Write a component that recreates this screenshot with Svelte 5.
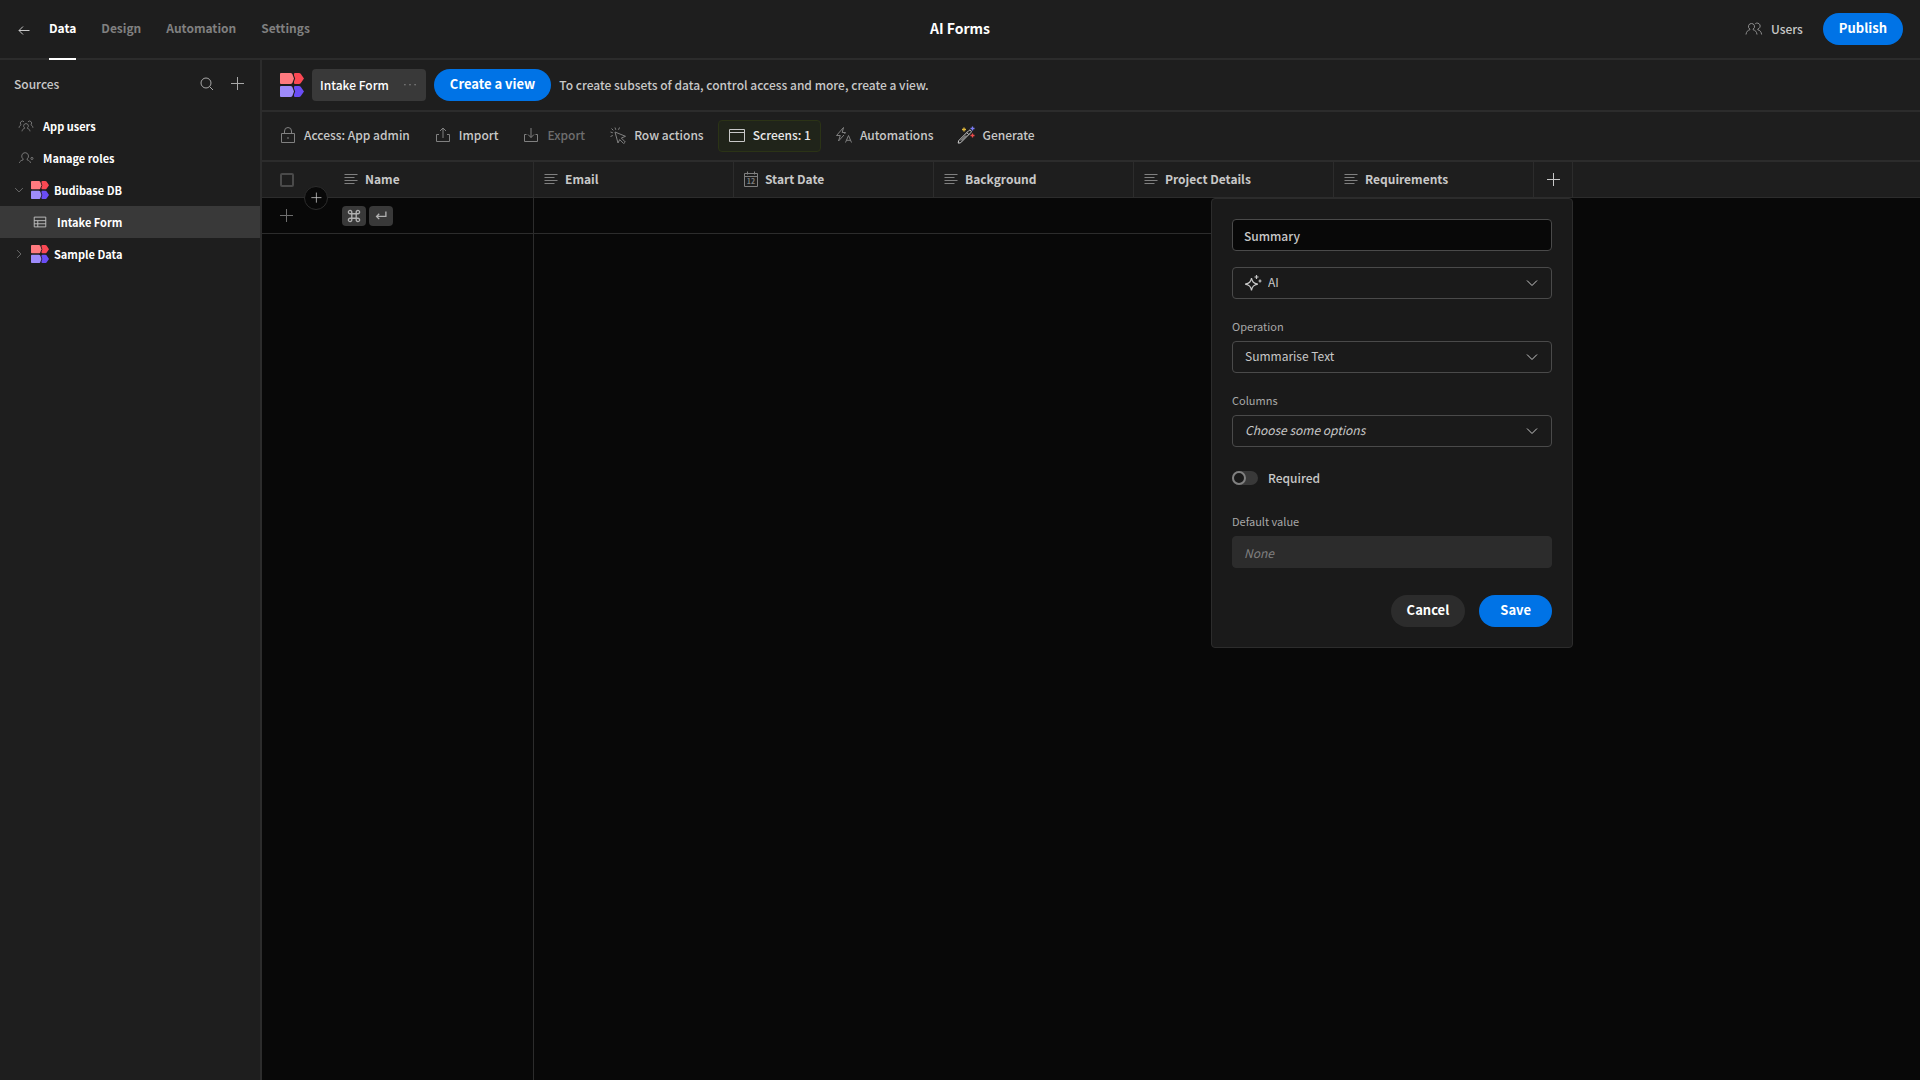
<script lang="ts">
  type Source = {
    name: string;
    icon: string;
    kind: "root" | "db" | "table";
    open?: boolean;
    selected?: boolean;
  };

  const tabs = ["Data", "Design", "Automation", "Settings"];
  let activeTab = $state("Data");

  const sources: Source[] = [
    { name: "App users", icon: "userGroup", kind: "root" },
    { name: "Manage roles", icon: "userAdmin", kind: "root" },
    { name: "Budibase DB", icon: "logo", kind: "db", open: true },
    { name: "Intake Form", icon: "table", kind: "table", selected: true },
    { name: "Sample Data", icon: "logo", kind: "db" },
  ];

  const actions = [
    { label: "Access: App admin", icon: "lock" },
    { label: "Import", icon: "import" },
    { label: "Export", icon: "export", disabled: true },
    { label: "Row actions", icon: "cursor" },
    { label: "Screens: 1", icon: "screen", accent: true },
    { label: "Automations", icon: "automation" },
    { label: "Generate", icon: "wand" },
  ];

  const columns = [
    { label: "Email", icon: "text" },
    { label: "Start Date", icon: "calendar" },
    { label: "Background", icon: "text" },
    { label: "Project Details", icon: "text" },
    { label: "Requirements", icon: "text" },
  ];

  // 18x18 outlines
  const icons: Record<string, string> = {
    back: "M14.5 9.5H4M8 5.5l-4 4 4 4",
    search: "M8 3a5 5 0 1 1 0 10A5 5 0 0 1 8 3ZM11.6 11.6 15 15",
    plus: "M9.5 2v13M3 8.5h13",
    chevronDown: "M4 6.5 9 11.5 14 6.5",
    chevronRight: "M6.5 4 11.5 9 6.5 14",
    dots: "M3 8.5h.6v.6H3ZM8.7 8.5h.6v.6h-.6ZM14.4 8.5h.6v.6h-.6Z",
    lock: "M2.5 7.5h13v9h-13ZM5.5 7.5V5a3.5 3.5 0 0 1 7 0v2.5M9 11v2",
    import: "M9 12V2M6 5l3-3 3 3M5 8.5H2.5v7h13v-7H13",
    export: "M9 2v9.5M6 8.5l3 3 3-3M4.5 8.5h-2v7h13v-7h-2",
    cursor:
      "M6 6l10.5 4.3-4.2 1.7 4 4-1.6 1.6-4-4-1.7 3.4ZM6.8 3.8 6 1.5M3.8 6.8 1.5 6M4.3 4.3 2.5 2.5M9.5 3.8l1-2.3M3.8 9.5l-2.3 1",
    screen: "M1.5 3.5h15v12h-15ZM1.5 6.5h15",
    automation: "M8.5 1.5l-7 8h3.8L3.5 15 9 9M8.5 1.5l-1.3 5h3.3L9.5 8M10.5 16.5l3-7 3 7M11.5 14.3h4",
    text: "M2.5 4.5h13M2.5 7.5h10M2.5 10.5h13M2.5 13.5h10",
    calendar: "M2.5 3.5h13v13h-13ZM2.5 6.5h13M5.5 1.5v3M12.5 1.5v3",
    table: "M2.5 3.5h13v11h-13ZM2.5 7.5h13M2.5 11h13M6.5 7.5v7",
    users:
      "M6.5 3.5A3 3 0 0 1 8.2 9v.8c2 .5 3.500 1.800 3.800 4.700M6.500 3.500A3 3 0 0 0 4.800 9v.8c-2 .5-3.500 1.800-3.800 4.700M10.300 3.700a3 3 0 1 1 2.500 5.300v.8c2 .5 3.500 1.800 3.800 4.700",
    userGroup:
      "M9 6.300a2.600 2.600 0 0 1 1.600 4.700v.7c1.600.4 2.600 1.400 2.900 3.300M9 6.300A2.600 2.600 0 0 0 7.400 11v.7c-1.600.4-2.600 1.400-2.900 3.300M6.800 4.300a2.300 2.300 0 1 0-3.600 3V8C2 8.500 1.400 9.300 1.200 11M11.200 4.300a2.300 2.300 0 1 1 3.600 3V8c1.200.5 1.800 1.300 2 3",
    userAdmin:
      "M8 3a3.900 3.900 0 0 1 2.300 7v1.200c1.900.4 3.300 1.400 3.900 3.300M8 3a3.900 3.900 0 0 0-2.300 7v1.200c-1.900.4-3.700 1.400-4.200 3.300M15.700 8.300a1.200 1.200 0 1 1 0 2.400 1.200 1.200 0 0 1 0-2.400",
    command:
      "M6.5 6.5h5v5h-5ZM6.5 6.5V4.700a1.900 1.900 0 1 0-1.900 1.800ZM11.5 6.5h1.900a1.900 1.900 0 1 0-1.900-1.800ZM11.5 11.5v1.800a1.900 1.900 0 1 0 1.900-1.800ZM6.5 11.5H4.600a1.900 1.900 0 1 0 1.900 1.800Z",
    enter: "M14.5 4v5.5H4M7 6.5l-3 3 3 3",
    sparkle:
      "M7.500 4c.8 4 2 5.200 6.300 6.200-4.300 1-5.500 2.200-6.300 6.300-.8-4.100-2-5.300-6.300-6.300C5.500 9.200 6.700 8 7.500 4ZM12.500 1v4M10.500 3h4M16 5.500v3M14.500 7h3",
  };

  let columnName = $state("Summary");
  let columnType = $state("AI");
  let operation = $state("Summarise Text");
  let required = $state(false);
</script>

{#snippet icon(name: string, size = 18)}
  {#if name === "logo"}
    <svg class="icon" width={size} height={size} viewBox="0 0 24 24" aria-hidden="true">
      <path fill="#ff7a7f" d="M1 0h9.500c.7 0 1.300.3 1.700.8L14 5.500l-1.800 4.700c-.4.500-1 .8-1.700.8H1a1 1 0 0 1-1-1V1a1 1 0 0 1 1-1Z" />
      <path fill="#fb4853" d="M15 0h4c.7 0 1.300.3 1.700.8L24 5.500l-3.300 4.700c-.4.500-1 .8-1.700.8h-4a1 1 0 0 1-1-1V8.500l1.200-3L14 2.500V1a1 1 0 0 1 1-1Z" />
      <path fill="#9e8bfb" d="M1 13h9.500c.7 0 1.300.3 1.700.8l1.800 4.700-1.800 4.700c-.4.500-1 .8-1.700.8H1a1 1 0 0 1-1-1v-9a1 1 0 0 1 1-1Z" />
      <path fill="#6a4df5" d="M15 13h4c.7 0 1.300.3 1.700.8l3.300 4.700-3.300 4.700c-.4.500-1 .8-1.700.8h-4a1 1 0 0 1-1-1v-1.500l1.200-3-1.200-3V14a1 1 0 0 1 1-1Z" />
    </svg>
  {:else if name === "wand"}
    <svg class="icon" width={size} height={size} viewBox="0 0 18 18" fill="none" aria-hidden="true">
      <path stroke="#d0d0d0" d="M11.800 4.600a1.400 1.400 0 0 1 2 2L3.600 16.800l-2.400.3.400-2.300ZM10 6.800l1.800 1.800M4 14.500l5-5" />
      <path stroke="#e0b63a" stroke-width="1.3" d="M7 1.5v4M5 3.5h4" />
      <path stroke="#7b7cf5" stroke-width="1.3" d="M15.5 .5v4M13.5 2.5h4" />
      <path stroke="#ee4a4a" stroke-width="1.3" d="M15.5 7.5v4M13.5 9.5h4" />
    </svg>
  {:else}
    <svg class="icon" width={size} height={size} viewBox="0 0 18 18" fill="none" stroke="currentColor" aria-hidden="true">
      <path d={icons[name]} />
      {#if name === "calendar"}
        <text x="9" y="14" text-anchor="middle" font-size="7" stroke="none" fill="currentColor">12</text>
      {/if}
    </svg>
  {/if}
{/snippet}

<div class="app">
  <header class="topbar">
    <nav class="tabs">
      <a class="back" href="#apps" aria-label="Back to apps">{@render icon("back")}</a>
      {#each tabs as tab}
        <a
          class="tab"
          class:active={tab === activeTab}
          href="#{tab.toLowerCase()}"
          onclick={() => (activeTab = tab)}>{tab}</a
        >
      {/each}
    </nav>
    <h1>AI Forms</h1>
    <div class="topbar-right">
      <button class="users">{@render icon("users")} Users</button>
      <button class="pill primary">Publish</button>
    </div>
  </header>

  <aside class="sidebar">
    <div class="sidebar-head">
      <h2>Sources</h2>
      <button class="plain" aria-label="Search">{@render icon("search")}</button>
      <button class="plain" aria-label="Add source">{@render icon("plus")}</button>
    </div>
    <ul>
      {#each sources as source}
        <li>
          <a class="source {source.kind}" class:selected={source.selected} href="#source">
            {#if source.kind === "db"}
              {@render icon(source.open ? "chevronDown" : "chevronRight", 14)}
            {/if}
            {@render icon(source.icon, source.kind === "db" ? 18 : 16)}
            <span>{source.name}</span>
          </a>
        </li>
      {/each}
    </ul>
  </aside>

  <main>
    <div class="view-bar">
      {@render icon("logo", 24)}
      <button class="view-tab">Intake Form {@render icon("dots", 16)}</button>
      <button class="pill primary">Create a view</button>
      <p>To create subsets of data, control access and more, create a view.</p>
    </div>

    <div class="toolbar">
      {#each actions as action}
        <button class="action" class:accent={action.accent} disabled={action.disabled}>
          {@render icon(action.icon)}
          {action.label}
        </button>
      {/each}
    </div>

    <div class="grid">
      <table>
        <colgroup>
          <col class="col-gutter" />
          <col class="col-data" />
          {#each columns as _}
            <col class="col-data" />
          {/each}
          <col class="col-add" />
          <col />
        </colgroup>
        <thead>
          <tr>
            <th class="gutter">
              <input type="checkbox" aria-label="Select all rows" />
              <button class="insert" aria-label="Insert row">{@render icon("plus", 14)}</button>
            </th>
            <th class="ruled"><div class="cell">{@render icon("text")} Name</div></th>
            {#each columns as column}
              <th class="ruled"><div class="cell">{@render icon(column.icon)} {column.label}</div></th>
            {/each}
            <th class="ruled add">
              <button class="plain" aria-label="Add column">{@render icon("plus")}</button>

              <form class="popover" onsubmit={(e) => e.preventDefault()}>
                <input class="field" type="text" aria-label="Column name" bind:value={columnName} />
                <div class="select with-icon">
                  {@render icon("sparkle")}
                  <select class="field" aria-label="Type" bind:value={columnType}>
                    <option>AI</option>
                    <option>Text</option>
                  </select>
                  {@render icon("chevronDown")}
                </div>
                <label for="operation">Operation</label>
                <div class="select">
                  <select class="field" id="operation" bind:value={operation}>
                    <option>Summarise Text</option>
                    <option>Translate</option>
                  </select>
                  {@render icon("chevronDown")}
                </div>
                <label for="columns">Columns</label>
                <div class="select">
                  <select class="field placeholder" id="columns">
                    <option>Choose some options</option>
                  </select>
                  {@render icon("chevronDown")}
                </div>
                <label class="switch">
                  <input type="checkbox" role="switch" bind:checked={required} />
                  Required
                </label>
                <label for="default">Default value</label>
                <input class="field" id="default" type="text" placeholder="None" disabled />
                <div class="buttons">
                  <button class="pill" type="button">Cancel</button>
                  <button class="pill primary" type="submit">Save</button>
                </div>
              </form>
            </th>
            <th></th>
          </tr>
        </thead>
        <tbody>
          <tr>
            <td class="gutter"><button class="plain" aria-label="Add row">{@render icon("plus")}</button></td>
            <td class="ruled">
              <div class="keys">
                <kbd>{@render icon("command", 16)}</kbd>
                <kbd>{@render icon("enter", 16)}</kbd>
              </div>
            </td>
            {#each columns as _}
              <td></td>
            {/each}
            <td class="blank"></td>
            <td class="blank"></td>
          </tr>
        </tbody>
      </table>
      <div class="sticky-rule"></div>
    </div>
  </main>
</div>

<style>
  :global(body) {
    background: #080808;
  }

  .app {
    --bg: #1e1e1e;
    --line: #2c2c2c;
    --text: #c8c8c8;
    --muted: #808080;
    --blue: #0073e6;
    display: grid;
    grid-template-columns: 262px 1fr;
    grid-template-rows: 60px 1fr;
    min-height: 100vh;
    color: var(--text);
    font-family: "Noto Sans CJK SC", "Noto Sans", sans-serif;
    font-size: 12px;
    font-weight: 500;
    line-height: 20px;
  }

  .app :global(*),
  .app :global(*::before) {
    box-sizing: border-box;
  }

  h1,
  h2,
  p,
  ul {
    margin: 0;
    padding: 0;
  }

  a {
    color: inherit;
    text-decoration: none;
  }

  button,
  input,
  select {
    margin: 0;
    font: inherit;
    color: inherit;
  }

  button {
    display: flex;
    align-items: center;
    padding: 0;
    border: 0;
    background: none;
  }

  .icon {
    flex: none;
    display: block;
  }

  .topbar {
    grid-column: 1 / -1;
    display: grid;
    grid-template-columns: 1fr auto 1fr;
    background: var(--bg);
    border-bottom: 2px solid var(--line);
  }

  .tabs {
    display: flex;
    gap: 25px;
    padding-left: 15px;
  }

  .back {
    display: flex;
    align-items: center;
    margin-right: -9px;
  }

  .tab {
    height: 60px;
    padding-top: 18px;
    color: var(--muted);
    font-weight: 700;
  }

  .tab.active {
    color: #fff;
    border-bottom: 2px solid #fff;
  }

  h1 {
    align-self: center;
    padding-bottom: 4px;
    color: #fff;
    font-size: 14px;
    font-weight: 700;
  }

  .topbar-right {
    display: flex;
    align-items: center;
    justify-content: flex-end;
    gap: 20px;
    padding: 0 17px 2px 0;
  }

  .users {
    gap: 8px;
  }

  .users .icon {
    color: #909090;
  }

  .pill {
    height: 32px;
    padding: 0 16px 2px;
    border-radius: 16px;
    background: #2c2c2c;
    color: #fff;
    font-size: 13px;
    font-weight: 700;
  }

  .pill.primary {
    background: var(--blue);
  }

  .sidebar {
    background: var(--bg);
    border-right: 2px solid var(--line);
  }

  .sidebar-head {
    display: flex;
    align-items: center;
    gap: 12px;
    height: 50px;
    padding: 0 14px 2px;
  }

  h2 {
    flex: 1;
    font-size: 12px;
    font-weight: 500;
  }

  .plain {
    color: #a8a8a8;
  }

  ul {
    list-style: none;
  }

  .source {
    display: flex;
    align-items: center;
    height: 32px;
    padding-bottom: 1px;
    color: #fff;
    font-size: 11px;
    font-weight: 700;
  }

  .source .icon {
    color: var(--muted);
  }

  .source.root {
    gap: 9px;
    padding-left: 18px;
  }

  .source.db {
    gap: 5px;
    padding-left: 12px;
  }

  .source.table {
    gap: 9px;
    padding-left: 32px;
  }

  .source.selected {
    background: #393939;
  }

  .source.selected .icon {
    color: #c8c8c8;
  }

  main {
    display: flex;
    flex-direction: column;
    min-width: 0;
  }

  .view-bar {
    display: flex;
    align-items: center;
    gap: 8px;
    height: 52px;
    padding-left: 18px;
    background: var(--bg);
    border-bottom: 2px solid var(--line);
  }

  .view-tab {
    gap: 13px;
    height: 32px;
    padding: 0 8px;
    border-radius: 4px;
    background: #393939;
    color: #fff;
  }

  .view-tab .icon {
    color: #909090;
  }

  .toolbar {
    display: flex;
    align-items: center;
    gap: 4px;
    height: 50px;
    padding-left: 7px;
    background: var(--bg);
    border-bottom: 2px solid var(--line);
  }

  .action {
    gap: 7px;
    height: 32px;
    padding: 0 9px 2px;
    border: 1px solid transparent;
    border-radius: 4px;
  }

  .action .icon {
    color: var(--muted);
  }

  .action:disabled {
    color: #6e6e6e;
  }

  .action.accent {
    background: #20241a;
    border-color: #2b3316;
    color: #e8e8e8;
  }

  .action.accent .icon {
    color: #c8c8c8;
  }

  .grid {
    flex: 1;
    display: flex;
    flex-direction: column;
    background: #080808;
  }

  table {
    width: 100%;
    table-layout: fixed;
    border-collapse: separate;
    border-spacing: 0;
  }

  .col-gutter {
    width: 72px;
  }

  .col-data {
    width: 200px;
  }

  .col-add {
    width: 39px;
  }

  th,
  td {
    height: 36px;
    padding: 0;
    border-bottom: 1px solid var(--line);
    font-weight: 500;
    text-align: left;
  }

  th {
    background: var(--bg);
    font-weight: 700;
  }

  .ruled {
    border-right: 1px solid var(--line);
  }

  .blank {
    border-bottom: 0;
  }

  .cell {
    display: flex;
    align-items: center;
    gap: 5px;
    padding: 0 0 2px 8px;
  }

  .cell .icon {
    color: var(--muted);
  }

  .gutter {
    position: relative;
    padding-left: 18px;
  }

  .gutter input {
    display: block;
    width: 14px;
    height: 14px;
    appearance: none;
    border: 2px solid #4a4a4a;
    border-radius: 2px;
  }

  td .plain {
    margin-left: -3px;
    color: #6e6e6e;
  }

  .insert {
    position: absolute;
    right: 6px;
    bottom: -13px;
    z-index: 1;
    justify-content: center;
    width: 24px;
    height: 24px;
    border: 1px solid #2c2c2c;
    border-radius: 50%;
    background: #080808;
  }

  .keys {
    display: flex;
    gap: 3px;
    padding-left: 8px;
  }

  kbd {
    display: grid;
    place-items: center;
    width: 24px;
    height: 20px;
    border-radius: 4px;
    background: #393939;
    color: #b0b0b0;
  }

  kbd .icon {
    stroke-width: 1.5;
  }

  .sticky-rule {
    flex: 1;
    width: 272px;
    border-right: 1px solid var(--line);
  }

  .add {
    position: relative;
  }

  .add .plain {
    margin: 0 auto;
    color: var(--text);
  }

  .popover {
    position: absolute;
    top: 36px;
    right: -1px;
    width: 362px;
    padding: 20px;
    border: 1px solid var(--line);
    border-radius: 4px;
    background: #1a1a1a;
    font-weight: 400;
  }

  .field {
    display: block;
    width: 100%;
    height: 32px;
    padding: 0 12px 2px;
    border: 1px solid #4a4a4a;
    border-radius: 4px;
    background: transparent;
    appearance: none;
    outline: 0;
  }

  input.field {
    padding: 0 11px;
    background: #080808;
    font-weight: 500;
  }

  input.field:disabled {
    border-color: #2c2c2c;
    background: #2c2c2c;
  }

  input.field::placeholder {
    color: var(--muted);
    font-style: italic;
    font-weight: 400;
    opacity: 1;
  }

  .placeholder {
    font-style: italic;
  }

  .select {
    display: grid;
    align-items: center;
  }

  .select > * {
    grid-area: 1 / 1;
  }

  .select > .icon:last-child {
    justify-self: end;
    margin-right: 11px;
    pointer-events: none;
  }

  .with-icon {
    margin-top: 16px;
  }

  .with-icon > .icon:first-child {
    margin-left: 12px;
    stroke-width: 1.2;
  }

  .with-icon .field {
    padding-left: 35px;
  }

  label {
    display: block;
    margin-top: 17px;
    padding-bottom: 5px;
    color: #a8a8a8;
    font-size: 11px;
    line-height: 20px;
  }

  .switch {
    display: flex;
    align-items: center;
    gap: 10px;
    margin: 21px 0 23px;
    padding: 0;
    color: var(--text);
    font-size: 12px;
    font-weight: 500;
  }

  .switch input {
    width: 26px;
    height: 14px;
    appearance: none;
    border-radius: 7px;
    background: #393939;
  }

  .switch input::before {
    content: "";
    display: block;
    width: 14px;
    height: 14px;
    border: 2px solid #808080;
    border-radius: 50%;
    background: #1a1a1a;
  }

  .switch input:checked::before {
    margin-left: 12px;
  }

  .buttons {
    display: flex;
    justify-content: flex-end;
    gap: 14px;
    margin-top: 27px;
  }

  .buttons .primary {
    padding: 0 21px 2px;
  }
</style>
